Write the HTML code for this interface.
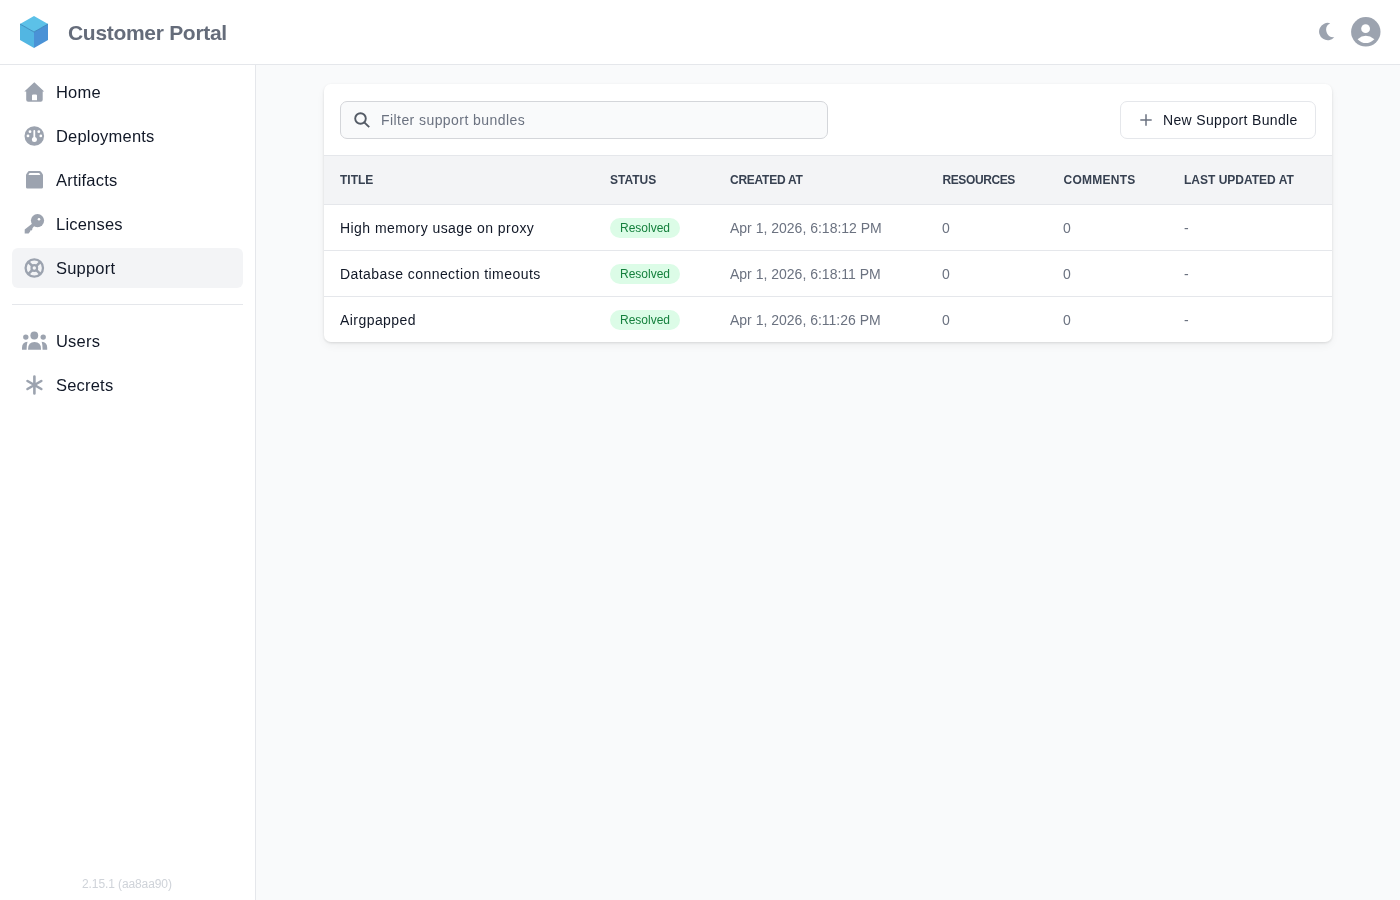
<!DOCTYPE html>
<html>
<head>
<meta charset="utf-8">
<style>
*{box-sizing:border-box;margin:0;padding:0}
html{-webkit-font-smoothing:antialiased}
.hdr,.side,.card{will-change:transform}
html,body{width:1400px;height:900px;overflow:hidden;background:#f9fafb;font-family:"Liberation Sans",sans-serif;color:#111827}
.hdr{position:absolute;left:0;top:0;width:1400px;height:65px;background:#fff;border-bottom:1px solid #e5e7eb}
.logo{position:absolute;left:19px;top:16px;width:30px;height:32px}
.brand{position:absolute;left:68px;top:19px;font-size:21px;font-weight:700;color:#656c7a;letter-spacing:-0.3px;line-height:28px;white-space:nowrap}
.moon{position:absolute;left:1317px;top:21px;width:20px;height:21px}
.avatar{position:absolute;left:1348px;top:14px;width:36px;height:36px}
.side{position:absolute;left:0;top:65px;width:256px;height:835px;background:#fff;border-right:1px solid #e5e7eb}
.nav{position:absolute;left:12px;width:231px;height:40px;border-radius:6px}
.nav.active{background:#f3f4f6}
.nav svg{position:absolute;left:12px;top:10px;width:20px;height:20px;overflow:visible}
.nav span{position:absolute;left:44px;top:11px;font-size:16.5px;line-height:19px;color:#111827;white-space:nowrap;letter-spacing:0.2px}
.divider{position:absolute;left:12px;top:239px;width:231px;height:1px;background:#e5e7eb}
.ver{position:absolute;left:82px;top:876px;font-size:12px;color:#cfd3d9;white-space:nowrap;line-height:14px;letter-spacing:-0.1px}
.card{position:absolute;left:324px;top:84px;width:1008px;height:258px;background:#fff;border-radius:7px;box-shadow:0 1px 3px 0 rgba(0,0,0,0.12),0 4px 8px 0 rgba(0,0,0,0.045);overflow:hidden}
.search{position:absolute;left:16px;top:17px;width:488px;height:38px;border:1px solid #d4d6da;border-radius:7px;background:#f9fafb}
.search svg{position:absolute;left:13px;top:10px;width:16px;height:16px}
.search span{position:absolute;left:40px;top:10px;font-size:14px;line-height:16px;color:#6b7280;white-space:nowrap;letter-spacing:0.43px}
.btn{position:absolute;left:796px;top:17px;width:196px;height:38px;border:1px solid #e5e7eb;border-radius:7px;background:#fff}
.btn svg{position:absolute;left:19px;top:12px;width:12px;height:12px}
.btn span{position:absolute;left:42px;top:10px;font-size:14px;line-height:16px;color:#111827;white-space:nowrap;letter-spacing:0.35px}
.thead{position:absolute;left:0;top:71px;width:1008px;height:50px;background:#f3f4f6;border-top:1px solid #e5e7eb;border-bottom:1px solid #e5e7eb}
.th{position:absolute;top:17px;font-size:12px;font-weight:700;color:#374151;line-height:14px;white-space:nowrap}
.row{position:absolute;left:0;width:1008px;height:46px;border-bottom:1px solid #e5e7eb}
.row.last{border-bottom:none}
.td{position:absolute;top:15px;font-size:14px;line-height:16px;color:#6b7280;white-space:nowrap}
.td.t{color:#111827;letter-spacing:0.44px}
.badge{position:absolute;left:286px;top:13px;width:70px;height:20px;border-radius:10px;background:#dcfce7;color:#15803d;font-size:12px;line-height:20px;text-align:center}
</style>
</head>
<body>
<div class="hdr">
  <svg class="logo" viewBox="0 0 30 32">
    <polygon points="15,0 29,8 15,16 1,8" fill="#5cc1e8"/>
    <polygon points="1,8 15,16 15,32 1,24" fill="#52b6e2"/>
    <polygon points="29,8 15,16 15,32 29,24" fill="#4a92d6"/>
    <polyline points="1,8 15,16 29,8" fill="none" stroke="#2f7fb5" stroke-width="0.8"/>
  </svg>
  <div class="brand">Customer Portal</div>
  <svg class="moon" viewBox="0 0 20 21"><path fill="#9ca3af" d="M13.2 2.2 A8.7 8.7 0 1 0 17.3 16.3 A7.5 7.5 0 0 1 13.2 2.2 Z"/></svg>
  <svg class="avatar" viewBox="0 0 36 36">
    <circle cx="17.8" cy="17.8" r="14.7" fill="#9ca3af"/>
    <circle cx="17.6" cy="14.7" r="4.4" fill="#fff"/>
    <path fill="#fff" d="M9.6 25.2 Q17.6 18.5 26.4 25.2 Q17.6 33 9.6 25.2Z"/>
  </svg>
</div>
<div class="side">
  <div class="nav" style="top:7px">
    <svg viewBox="0 0 20 20"><path fill="#9ca3af" d="M10.3 0.2 L20.2 9.5 L18.7 9.5 L18.7 17.7 Q18.7 19.7 16.7 19.7 L4.2 19.7 Q2.2 19.7 2.2 17.7 L2.2 9.5 L0.3 9.5 Z M8 13.6 Q8 12.4 9.2 12.4 L11.8 12.4 Q13 12.4 13 13.6 L13 18.3 L8 18.3 Z" fill-rule="evenodd"/></svg>
    <span>Home</span>
  </div>
  <div class="nav" style="top:51px">
    <svg viewBox="0 0 20 20"><circle cx="10.3" cy="10" r="9.8" fill="#9ca3af"/><rect x="9.4" y="4" width="1.8" height="9" rx="0.9" fill="#fff"/><circle cx="10.4" cy="13.6" r="2.5" fill="#fff"/><circle cx="6" cy="5.7" r="1.4" fill="#fff"/><circle cx="14.8" cy="5.7" r="1.4" fill="#fff"/><circle cx="4" cy="9.9" r="1.4" fill="#fff"/><circle cx="16.8" cy="9.9" r="1.4" fill="#fff"/></svg>
    <span>Deployments</span>
  </div>
  <div class="nav" style="top:95px">
    <svg viewBox="0 0 20 20"><path fill="#9ca3af" fill-rule="evenodd" d="M4.2 1 L15.6 1 Q16.4 1 17 1.8 L18.6 4 Q19 4.6 19 5.4 L19 17.2 Q19 18.6 17.6 18.6 L3.4 18.6 Q2 18.6 2 17.2 L2 5.4 Q2 4.6 2.4 4 L4 1.8 Q4.4 1 5 1 Z M5.6 3 L15.2 3 L16.4 5 L4.4 5 Z"/></svg>
    <span>Artifacts</span>
  </div>
  <div class="nav" style="top:139px">
    <svg viewBox="0 0 20 20"><g fill="#9ca3af"><circle cx="13.5" cy="6.6" r="6.6"/><path d="M9.6 8.6 L0.7 15.6 L0.7 19.4 L4.6 19.4 L6.2 17.6 L6.2 16.4 L7.6 16.4 L8.4 15.2 L8.4 14.2 L11.6 10.6 Z"/></g><circle cx="15" cy="5.2" r="1.3" fill="#fff"/></svg>
    <span>Licenses</span>
  </div>
  <div class="nav active" style="top:183px">
    <svg viewBox="0 0 20 20"><g fill="none" stroke="#9ca3af"><circle cx="10.3" cy="10" r="8.7" stroke-width="2.3"/><circle cx="10.3" cy="10" r="2.8" stroke-width="2.2"/><path stroke-width="2.6" d="M4.2 3.9 L8.2 7.9 M16.4 3.9 L12.4 7.9 M4.2 16.1 L8.2 12.1 M16.4 16.1 L12.4 12.1"/></g></svg>
    <span>Support</span>
  </div>
  <div class="divider"></div>
  <div class="nav" style="top:256px">
    <svg viewBox="0 -0.8 25 20" style="left:10px;width:25px"><g fill="#9ca3af"><circle cx="12.3" cy="3.7" r="3.9"/><circle cx="3.8" cy="5.3" r="2.7"/><circle cx="21.2" cy="5.3" r="2.7"/><path d="M6.1 18 L6.1 17 Q6.1 10.1 12.5 10.1 Q19 10.1 19 17 L19 18 Z"/><path d="M0 18 L0 16 Q0 10.5 5.5 10 Q4.6 13 4.6 18 Z"/><path d="M25.2 18 L25.2 16 Q25.2 10.5 19.7 10 Q20.6 13 20.6 18 Z"/></g></svg>
    <span>Users</span>
  </div>
  <div class="nav" style="top:300px">
    <svg viewBox="0 0 20 20"><g stroke="#9ca3af" stroke-width="2.6" stroke-linecap="round"><path d="M10.4 1.5 L10.4 18.5 M3.5 6 L17.3 14 M3.5 14 L17.3 6"/></g></svg>
    <span>Secrets</span>
  </div>
  <div class="ver" style="top:812px">2.15.1 (aa8aa90)</div>
</div>
<div class="card">
  <div class="search">
    <svg viewBox="0 0 16 16"><g fill="none" stroke="#545b66" stroke-width="1.9"><circle cx="6.5" cy="6.5" r="5.3"/><path d="M10.3 10.3 L15.2 15.2"/></g></svg>
    <span>Filter support bundles</span>
  </div>
  <div class="btn">
    <svg viewBox="0 0 12 12"><path d="M6 0.3 V11.7 M0.3 6 H11.7" stroke="#6b7280" stroke-width="1.5" fill="none"/></svg>
    <span>New Support Bundle</span>
  </div>
  <div class="thead">
    <div class="th" style="left:16px">TITLE</div>
    <div class="th" style="left:286px">STATUS</div>
    <div class="th" style="left:406px;letter-spacing:-0.25px">CREATED AT</div>
    <div class="th" style="left:618.5px;letter-spacing:-0.4px">RESOURCES</div>
    <div class="th" style="left:739.5px;letter-spacing:0.25px">COMMENTS</div>
    <div class="th" style="left:860px">LAST UPDATED AT</div>
  </div>
  <div class="row" style="top:121px">
    <div class="td t" style="left:16px">High memory usage on proxy</div>
    <div class="badge">Resolved</div>
    <div class="td" style="left:406px">Apr 1, 2026, 6:18:12 PM</div>
    <div class="td" style="left:618px">0</div>
    <div class="td" style="left:739px">0</div>
    <div class="td" style="left:860px">-</div>
  </div>
  <div class="row" style="top:167px">
    <div class="td t" style="left:16px">Database connection timeouts</div>
    <div class="badge">Resolved</div>
    <div class="td" style="left:406px">Apr 1, 2026, 6:18:11 PM</div>
    <div class="td" style="left:618px">0</div>
    <div class="td" style="left:739px">0</div>
    <div class="td" style="left:860px">-</div>
  </div>
  <div class="row last" style="top:213px">
    <div class="td t" style="left:16px">Airgpapped</div>
    <div class="badge">Resolved</div>
    <div class="td" style="left:406px">Apr 1, 2026, 6:11:26 PM</div>
    <div class="td" style="left:618px">0</div>
    <div class="td" style="left:739px">0</div>
    <div class="td" style="left:860px">-</div>
  </div>
</div>
</body>
</html>
